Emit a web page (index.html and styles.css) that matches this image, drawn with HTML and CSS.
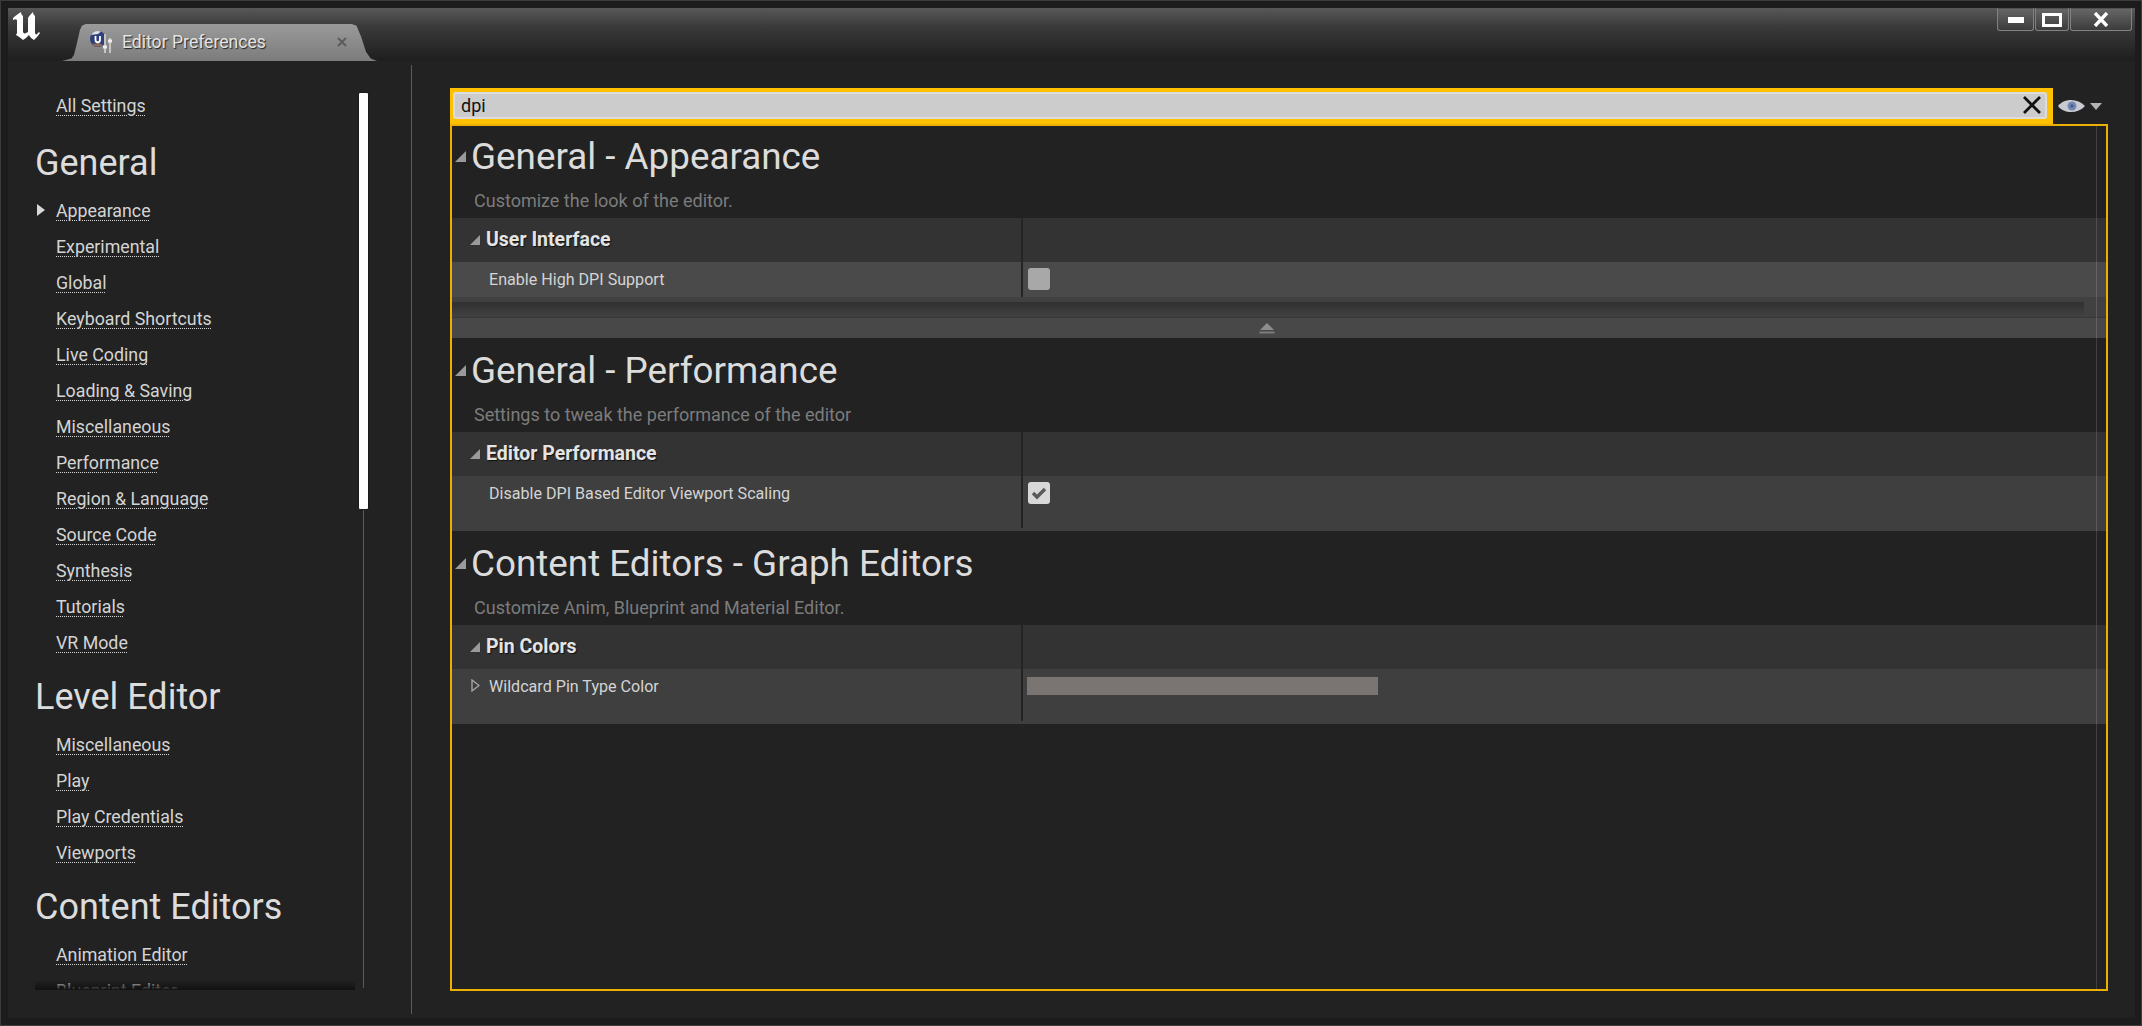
FILE: index.html
```html
<!DOCTYPE html>
<html lang="en">
<head>
    <title>Editor Preferences</title>
    <link rel="stylesheet" href="styles.css">
</head>
<body>

<div class="window">

    <!-- Title bar -->
    <div class="titlebar">
        <svg class="logo" width="30" height="30" viewBox="0 0 30 30">
            <path fill="#fff" d="M1 7 C3 5 6 3 9 1 C9 3 10 4 11 5 L11 20 C11 22 12 23 14 22 L16 21 L16 7 C17 5 19 3 21 1 C21 3 22 4 23 5 L23 21 C23 23 24 24 25 23 L27 21 L28 22 C26 25 24 27 22 29 C20 28 18 26 17 24 C15 26 13 28 11 29 C9 27 7 26 4 24 L5 22 L5 9 C4 8 3 8 1 9 Z"/>
        </svg>
        <div class="tab">
            <svg class="tab-icon" width="24" height="24" viewBox="0 0 24 24">
                <circle cx="9" cy="9" r="8" fill="#2f3f7c"/>
                <path d="M2 5 A8 8 0 0 1 12 1.5 L9 4 Z" fill="#e0e0e8"/>
                <path d="M3 14 A8 8 0 0 0 14 15 L10 13 Z" fill="#8a6a5a"/>
                <path d="M6.5 6 V10 A2.2 2.2 0 0 0 11 10 V6" fill="none" stroke="#fff" stroke-width="1.8"/>
                <path d="M16 4 V23 M21 8 V23" stroke="#c4c4c4" stroke-width="2"/>
                <path d="M14 17 H18 M19 11 H23" stroke="#eee" stroke-width="3"/>
            </svg>
            <span class="tab-title">Editor Preferences</span>
            <svg class="tab-close" width="10" height="10" viewBox="0 0 10 10">
                <path d="M1 1 L9 9 M9 1 L1 9" stroke="#5c5c5c" stroke-width="2"/>
            </svg>
        </div>
        <div class="window-buttons">
            <div class="win-btn win-min"><svg width="16" height="7" viewBox="0 0 16 7"><rect width="16" height="6" y="1" fill="#fff"/></svg></div>
            <div class="win-btn win-max"><svg width="20" height="14" viewBox="0 0 20 14"><path fill="none" stroke="#fff" stroke-width="3" d="M1.5 1.5 H18.5 V12.5 H1.5 Z"/></svg></div>
            <div class="win-btn win-close"><svg width="16" height="15" viewBox="0 0 16 15"><path d="M2 1 L14 14 M14 1 L2 14" stroke="#fff" stroke-width="3.4"/></svg></div>
        </div>
    </div>

    <div class="content">

        <!-- Settings list -->
        <div class="sidebar">
            <div class="settings-list">
                <a class="link link-first">All Settings</a>
                <h2 class="heading-first">General</h2>
                <a class="link active">Appearance</a>
                <a class="link">Experimental</a>
                <a class="link">Global</a>
                <a class="link">Keyboard Shortcuts</a>
                <a class="link">Live Coding</a>
                <a class="link">Loading &amp; Saving</a>
                <a class="link">Miscellaneous</a>
                <a class="link">Performance</a>
                <a class="link">Region &amp; Language</a>
                <a class="link">Source Code</a>
                <a class="link">Synthesis</a>
                <a class="link">Tutorials</a>
                <a class="link">VR Mode</a>
                <h2>Level Editor</h2>
                <a class="link">Miscellaneous</a>
                <a class="link">Play</a>
                <a class="link">Play Credentials</a>
                <a class="link">Viewports</a>
                <h2>Content Editors</h2>
                <a class="link">Animation Editor</a>
                <a class="link">Blueprint Editor</a>
                <div class="list-shadow"></div>
            </div>
            <div class="scroll-track"><div class="scroll-thumb"></div></div>
        </div>

        <!-- Details -->
        <div class="main">
            <div class="search-row">
                <div class="search">
                    <div class="search-input">
                        <span class="search-text">dpi</span>
                        <svg width="20" height="20" viewBox="0 0 20 20"><path d="M2 2 L18 18 M18 2 L2 18" stroke="#111" stroke-width="2.8"/></svg>
                    </div>
                </div>
                <svg class="eye" width="27" height="18" viewBox="0 0 27 18">
                    <path fill="#c8ccd2" d="M0 9 C6 1 20 1 27 9 C20 17 6 17 0 9 Z"/>
                    <circle cx="14" cy="9" r="4.5" fill="#7488b4"/>
                    <circle cx="14" cy="9" r="1.8" fill="#4a5c90"/>
                </svg>
                <svg class="caret" width="12" height="7" viewBox="0 0 12 7"><path fill="#b4b4b4" d="M0 0 H12 L6 7 Z"/></svg>
            </div>

            <div class="panel">

                <div class="section section-first">
                    <div class="section-title">
                        <svg width="11" height="11" viewBox="0 0 11 11"><path fill="#9a9a9a" d="M11 0 V11 H0 Z"/></svg>
                        General - Appearance
                    </div>
                    <div class="section-desc">Customize the look of the editor.</div>
                    <div class="row category">
                        <div class="name">
                            <svg width="10" height="10" viewBox="0 0 10 10"><path fill="#9a9a9a" d="M10 0 V10 H0 Z"/></svg>
                            User Interface
                        </div>
                        <div class="value"></div>
                    </div>
                    <div class="row prop prop-light">
                        <div class="name name-plain">Enable High DPI Support</div>
                        <div class="value"><div class="checkbox"></div></div>
                    </div>
                    <div class="advanced">
                        <div class="advanced-shadow"></div>
                        <div class="advanced-bar">
                            <svg width="16" height="11" viewBox="0 0 16 11"><path fill="#8e8e8e" d="M8 0 L15 7 H1 Z"/><rect y="8.5" x="0.5" width="15" height="2" fill="#7c7c7c"/></svg>
                        </div>
                    </div>
                </div>

                <div class="section">
                    <div class="section-title">
                        <svg width="11" height="11" viewBox="0 0 11 11"><path fill="#9a9a9a" d="M11 0 V11 H0 Z"/></svg>
                        General - Performance
                    </div>
                    <div class="section-desc">Settings to tweak the performance of the editor</div>
                    <div class="row category">
                        <div class="name">
                            <svg width="10" height="10" viewBox="0 0 10 10"><path fill="#9a9a9a" d="M10 0 V10 H0 Z"/></svg>
                            Editor Performance
                        </div>
                        <div class="value"></div>
                    </div>
                    <div class="row prop prop-tall">
                        <div class="name name-plain">Disable DPI Based Editor Viewport Scaling</div>
                        <div class="value">
                            <div class="checkbox checkbox-on">
                                <svg width="16" height="14" viewBox="0 0 16 14"><path fill="none" stroke="#5a5a5a" stroke-width="3.4" d="M2 7 L6 11 L14 3"/></svg>
                            </div>
                        </div>
                    </div>
                </div>

                <div class="section">
                    <div class="section-title">
                        <svg width="11" height="11" viewBox="0 0 11 11"><path fill="#9a9a9a" d="M11 0 V11 H0 Z"/></svg>
                        Content Editors - Graph Editors
                    </div>
                    <div class="section-desc">Customize Anim, Blueprint and Material Editor.</div>
                    <div class="row category">
                        <div class="name">
                            <svg width="10" height="10" viewBox="0 0 10 10"><path fill="#9a9a9a" d="M10 0 V10 H0 Z"/></svg>
                            Pin Colors
                        </div>
                        <div class="value"></div>
                    </div>
                    <div class="row prop prop-tall">
                        <div class="name name-arrow">
                            <svg width="9" height="13" viewBox="0 0 9 13"><path fill="none" stroke="#a8a8a8" stroke-width="1.3" d="M1 1 L8 6.5 L1 12 Z"/></svg>
                            Wildcard Pin Type Color
                        </div>
                        <div class="value"><div class="color-bar"></div></div>
                    </div>
                </div>

            </div>
        </div>

    </div>
</div>

</body>
</html>
```

FILE: styles.css
```css
* {
    box-sizing: border-box;
}
body {
    margin: 0;
    background-color: #222;
    font-family: Roboto, "Liberation Sans", sans-serif;
    overflow: hidden;
}
.window {
    width: 2142px;
    height: 1026px;
    padding: 8px 7px 8px 8px;
    display: flex;
    flex-direction: column;
    background-color: #1c1c1c;
    box-shadow: inset 0 0 0 1px #3c3c3c;
}

/* Title bar */
.titlebar {
    height: 53px;
    display: flex;
    align-items: flex-start;
    background: linear-gradient(#585858 0%, #3a3a3a 35%, #1e1e1e 100%);
}
.logo {
    margin: 3px 0 0 4px;
    flex-shrink: 0;
}
.tab {
    width: 315px;
    height: 37px;
    margin: 16px 0 0 20px;
    padding: 6px 30px 0 27px;
    display: flex;
    align-items: flex-start;
    background: linear-gradient(#9a9a9a, #7c7c7c);
    clip-path: polygon(0 100%, 3% 93%, 3.8% 84%, 4.6% 57%, 5.7% 16%, 6.3% 5%, 7.5% 0, 92% 0, 93.5% 5%, 95% 35%, 96.5% 75%, 98% 93%, 100% 100%);
}
.tab-title {
    margin-left: 9px;
    line-height: 24px;
    font-size: 17.6px;
    color: #e4e4e4;
    text-shadow: 1px 1px 1px #222;
}
.tab-close {
    margin: 7px 0 0 auto;
}
.window-buttons {
    margin-left: auto;
    margin-right: 3px;
    display: flex;
    gap: 1px;
}
.win-btn {
    height: 23px;
    display: flex;
    align-items: center;
    justify-content: center;
    background: linear-gradient(#666, #3c3c3c);
    border: 1px solid #828282;
    border-top-color: #505050;
    border-radius: 0 0 3px 3px;
}
.win-min {
    width: 37px;
}
.win-max {
    width: 34px;
}
.win-close {
    width: 62px;
}

/* Settings list */
.content {
    flex: 1;
    display: flex;
    min-height: 0;
    background-color: #222;
}
.sidebar {
    width: 404px;
    margin: 4px 0;
    padding: 0 42px 0 27px;
    display: flex;
    border-right: 1px solid #5a5a5a;
}
.settings-list {
    position: relative;
    width: 320px;
    height: 925px;
    overflow: hidden;
}
.link {
    display: block;
    width: fit-content;
    height: 36px;
    margin-left: 21px;
    padding-top: 9px;
    font-size: 17.8px;
    line-height: 21px;
    color: #d4d4d4;
    text-decoration: underline dotted #d4d4d4 1px;
    text-underline-offset: 3px;
}
.link-first {
    margin-top: 21px;
}
.active::before {
    content: "";
    position: absolute;
    left: 2px;
    margin-top: 4px;
    border-left: 8px solid #d8d8d8;
    border-top: 6px solid transparent;
    border-bottom: 6px solid transparent;
}
h2 {
    margin: 0;
    height: 66px;
    padding-top: 18px;
    font-size: 36px;
    line-height: 40px;
    font-weight: 400;
    color: #dcdcdc;
}
.heading-first {
    height: 69px;
    padding-top: 21px;
}
.list-shadow {
    position: absolute;
    left: 0;
    right: 0;
    bottom: 0;
    height: 10px;
    background: linear-gradient(rgba(0,0,0,0), #111);
}
.scroll-track {
    width: 11px;
    height: 896px;
    margin: 27px 0 0 3px;
    background: linear-gradient(#5a5a5a, #5a5a5a) center / 1px 100% no-repeat;
}
.scroll-thumb {
    height: 418px;
    background-color: #fff;
    border: 1px solid #1a1a1a;
    border-radius: 2px;
}

/* Details */
.main {
    flex: 1;
    padding: 27px 0 0 38px;
}
.search-row {
    display: flex;
    align-items: center;
    height: 36px;
}
.search {
    width: 1603px;
    height: 37px;
    padding: 4px 6px 6px 3px;
    background-color: #ffc000;
}
.search-input {
    height: 27px;
    padding: 0 3px 0 6px;
    display: flex;
    align-items: center;
    justify-content: space-between;
    background-color: #ccc;
    border: 2px solid #dcdcdc;
    border-radius: 3px;
}
.search-text {
    font-size: 18px;
    color: #111;
}
.eye {
    margin-left: 5px;
}
.caret {
    margin-left: 5px;
    margin-top: 1px;
}
.panel {
    position: relative;
    width: 1658px;
    height: 867px;
    border: 2px solid #ecb100;
}
.panel::after {
    content: "";
    position: absolute;
    top: 0;
    bottom: 0;
    right: 9px;
    width: 1px;
    background-color: rgba(255,255,255,0.14);
}
.section-first {
    margin-top: -2px;
}
.section-title {
    height: 64px;
    display: flex;
    align-items: center;
    padding-left: 3px;
    font-size: 36.8px;
    color: #dcdcdc;
    gap: 5px;
}
.section-desc {
    height: 30px;
    padding: 1px 0 5px 22px;
    line-height: 24px;
    font-size: 18px;
    color: #7c7c7c;
}
.row {
    display: grid;
    grid-template-columns: 571px 1fr;
}
.name {
    border-right: 2px solid #242424;
}
.category {
    height: 44px;
    background-color: #333;
}
.category .name {
    display: flex;
    align-items: center;
    gap: 6px;
    padding: 0 0 1px 18px;
    font-size: 19.5px;
    font-weight: 700;
    color: #e4e4e4;
    text-shadow: 1px 1px 1px #111;
}
.prop {
    height: 35px;
    font-size: 16.1px;
    color: #d4d4d4;
    background-color: #4a4a4a;
}
.prop-tall {
    height: 55px;
    padding-bottom: 3px;
    background-color: #3f3f3f;
}
.name-plain {
    padding: 8px 0 0 37px;
    line-height: 20px;
}
.name-arrow {
    display: flex;
    align-items: flex-start;
    gap: 9px;
    padding: 8px 0 0 19px;
    line-height: 20px;
}
.name-arrow svg {
    margin-top: 2px;
}
.value {
    padding: 6px 0 0 5px;
}
.checkbox {
    width: 22px;
    height: 22px;
    background-color: #a8a8a8;
    border-radius: 3px;
}
.checkbox-on {
    display: flex;
    align-items: center;
    justify-content: center;
    background-color: #d8d8d8;
}
.color-bar {
    width: 351px;
    height: 18px;
    margin: 2px 0 0 -1px;
    background-color: #7a7472;
}
.advanced {
    height: 41px;
    background-color: #414141;
    padding-top: 5px;
}
.advanced-shadow {
    height: 15px;
    margin-right: 22px;
    background: linear-gradient(#303030, #3c3c3c 70%, #414141);
}
.advanced-bar {
    height: 21px;
    padding-right: 24px;
    display: flex;
    align-items: center;
    justify-content: center;
    background-color: #484848;
    border-top: 1px solid #363636;
}
```
